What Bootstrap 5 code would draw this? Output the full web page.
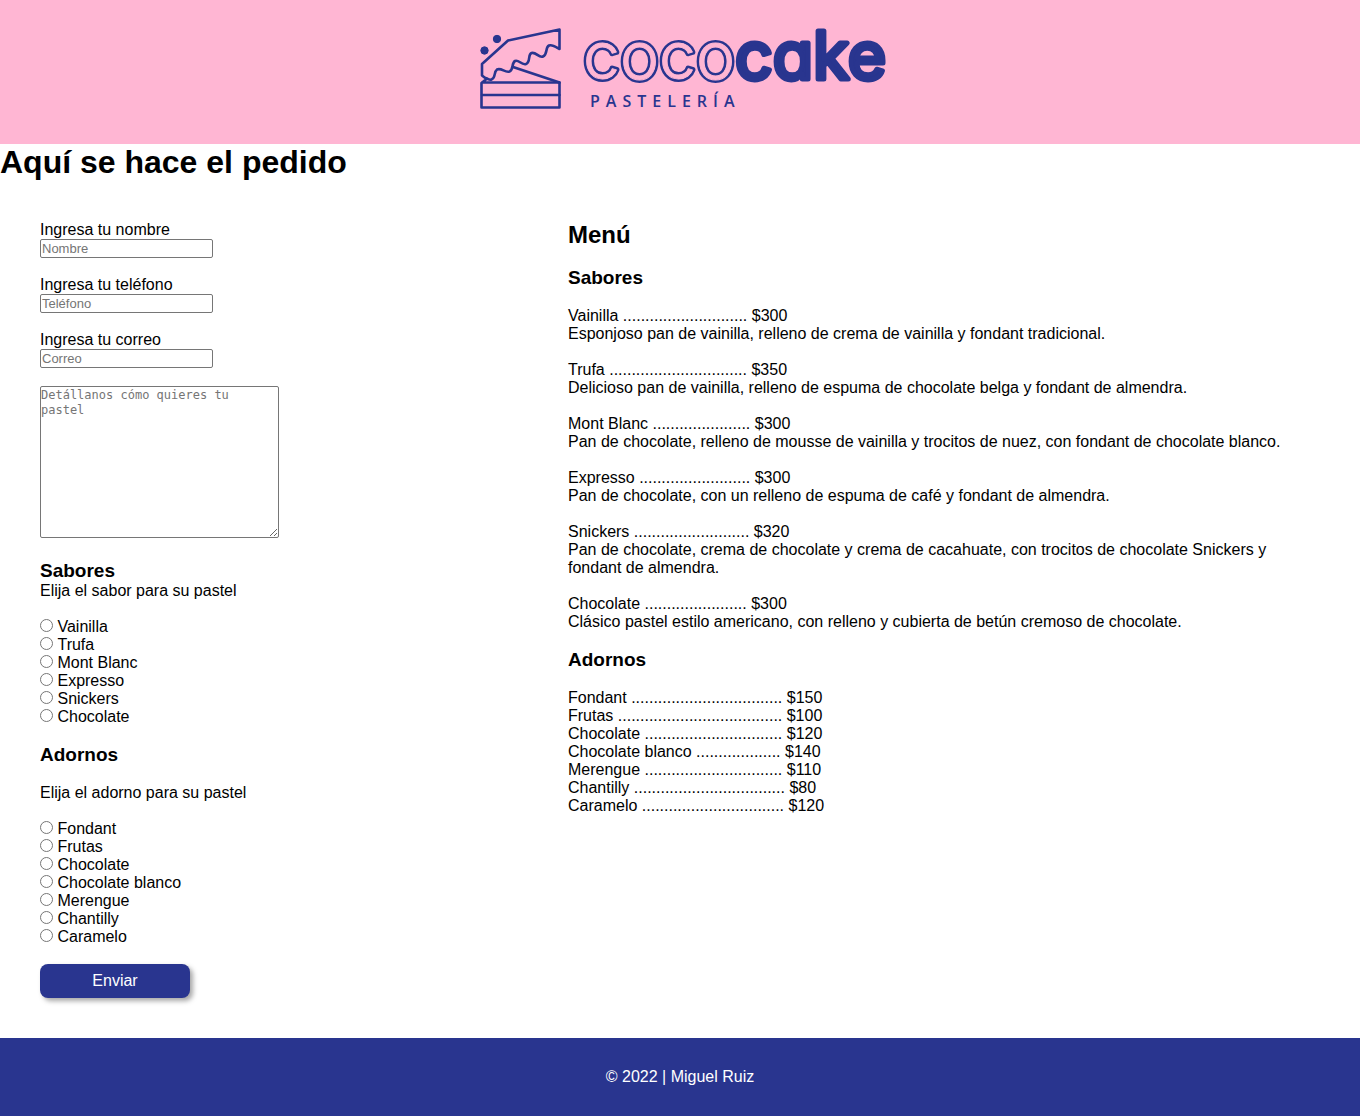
<!DOCTYPE html>
<html lang="es">
<head>
<meta charset="utf-8">
<meta name="viewport" content="width=device-width, initial-scale=1">
<title>Coco Cake | Pedido</title>
<link href="https://cdn.jsdelivr.net/npm/bootstrap@5.3.0/dist/css/bootstrap.min.css" rel="stylesheet">
<style>
  :root { --coco-pink: #ffb6d3; --coco-blue: #29358f; }
  body { font: 16px/18px "Liberation Sans", Arial, sans-serif; color: #000; background: #fff; }
  .site-head { background: var(--coco-pink); }
  .logo { width: 420px; height: 144px; max-width: 100%; }
  .ink { fill: var(--coco-blue); stroke: var(--coco-blue); }
  .icing { fill: var(--coco-pink); stroke: var(--coco-pink); }
  .logo-cake { font: 400 66px Inter, sans-serif; font-feature-settings: "cv11"; }
  .logo-coco { font: 300 66px Inter, sans-serif; }
  .logo-sub { font: 600 16px "Open Sans", sans-serif; letter-spacing: 6px; }
  h1, h2, h3 { font-weight: 700; margin: 0; }
  h1 { font-size: 32px; line-height: 37px; }
  h2 { font-size: 24px; line-height: 27px; margin-bottom: 20px; }
  h3 { font-size: 19px; line-height: 19px; padding-bottom: 2px; }
  .order { padding: 40px; }
  .order > .row { --bs-gutter-x: 40px; }
  p, .choices, .extras { margin: 0 0 18px; }
  .field { margin-bottom: 18px; }
  .field input { width: 173px; height: 19px; font-size: 13px; line-height: 15px; }
  .field input, .details { display: block; padding: 1px; border: 1px solid #767676; border-radius: 2px; background: #fff; }
  .details { width: 239px; height: 152px; padding: 1px 0; font: 12px/15px "DejaVu Sans Mono", monospace; margin-bottom: 23px; }
  ::placeholder { color: #757575; opacity: 1; }
  .choices input { width: 13px; height: 13px; margin: 0; }
  .section-gap { margin: 19px 0 18px; }
  .send { width: 150px; height: 34px; padding: 0; border: 0; border-radius: 8px; background: var(--coco-blue); color: #fff; line-height: 18px; box-shadow: 3px 3px 5px rgba(0,0,0,.35); }
  .send:hover { background: #1d286f; color: #fff; }
  .site-foot { background: var(--coco-blue); color: #fff; padding: 30px 0; }
  @media (min-width: 768px) {
    .order-form { width: 40%; }
    .order-menu { width: 60%; }
  }
</style>
</head>
<body>
<header class="site-head d-flex justify-content-center">
  <svg class="logo" viewBox="470 0 420 144" role="img" aria-label="Coco Cake Pastelería">
    <g class="ink" style="fill:none" stroke-width="2.6" stroke-linejoin="round" stroke-linecap="round">
      <path d="M482 82.500H559.500V107.500H481.500V83L486.500 79L482 75.500V64L508 40.500L559.500 29.500V49C556 47 552 44 549 45.500C545 47.500 548 54 543 56.500C539 58.500 536 51.500 531.500 53C527.500 54.500 531 62 526 64C521.500 65.500 518.500 59 515 61C511.500 63 513.500 70 509.500 71.500C505 73 501.500 67.500 497 69.500C493.500 72 496 78 491.500 79.500C489.500 80.500 487.500 79 486 78"/>
      <path d="M513 67L559.500 82.500M482 95H559.500"/>
    </g>
    <g class="ink" stroke="none">
      <circle cx="497" cy="39" r="3.700"/>
      <circle cx="484.500" cy="50.500" r="3.700"/>
    </g>
    <g class="ink" stroke-width="6" stroke-linejoin="round">
      <text id="coco" class="logo-coco" x="583" y="79">coco</text>
    </g>
    <use href="#coco" class="icing" stroke-width="1" stroke-linejoin="round"/>
    <text class="logo-cake ink" x="735" y="79" stroke-width="5" stroke-linejoin="round">cake</text>
    <text class="logo-sub ink" x="590" y="107" stroke-width="0">PASTELERÍA</text>
  </svg>
</header>

<main>
  <h1>Aquí se hace el pedido</h1>
  <div class="order">
    <div class="row">
      <form class="order-form">
        <div class="field"><label class="d-block" for="nombre">Ingresa tu nombre</label><input type="text" id="nombre" placeholder="Nombre"></div>
        <div class="field"><label class="d-block" for="telefono">Ingresa tu teléfono</label><input type="tel" id="telefono" placeholder="Teléfono"></div>
        <div class="field"><label class="d-block" for="correo">Ingresa tu correo</label><input type="email" id="correo" placeholder="Correo"></div>
        <textarea class="details" aria-label="Detalles del pastel" placeholder="Detállanos cómo quieres tu pastel"></textarea>

        <h3>Sabores</h3>
        <p>Elija el sabor para su pastel</p>
        <div class="choices">
          <div><input type="radio" name="sabor" id="s1"> <label for="s1">Vainilla</label></div>
          <div><input type="radio" name="sabor" id="s2"> <label for="s2">Trufa</label></div>
          <div><input type="radio" name="sabor" id="s3"> <label for="s3">Mont Blanc</label></div>
          <div><input type="radio" name="sabor" id="s4"> <label for="s4">Expresso</label></div>
          <div><input type="radio" name="sabor" id="s5"> <label for="s5">Snickers</label></div>
          <div><input type="radio" name="sabor" id="s6"> <label for="s6">Chocolate</label></div>
        </div>

        <h3 class="section-gap">Adornos</h3>
        <p>Elija el adorno para su pastel</p>
        <div class="choices">
          <div><input type="radio" name="adorno" id="a1"> <label for="a1">Fondant</label></div>
          <div><input type="radio" name="adorno" id="a2"> <label for="a2">Frutas</label></div>
          <div><input type="radio" name="adorno" id="a3"> <label for="a3">Chocolate</label></div>
          <div><input type="radio" name="adorno" id="a4"> <label for="a4">Chocolate blanco</label></div>
          <div><input type="radio" name="adorno" id="a5"> <label for="a5">Merengue</label></div>
          <div><input type="radio" name="adorno" id="a6"> <label for="a6">Chantilly</label></div>
          <div><input type="radio" name="adorno" id="a7"> <label for="a7">Caramelo</label></div>
        </div>
        <button type="submit" class="btn send d-block">Enviar</button>
      </form>

      <section class="order-menu">
        <h2>Menú</h2>
        <h3 class="section-gap">Sabores</h3>
        <p>Vainilla ............................ $300<br>Esponjoso pan de vainilla, relleno de crema de vainilla y fondant tradicional.</p>
        <p>Trufa ............................... $350<br>Delicioso pan de vainilla, relleno de espuma de chocolate belga y fondant de almendra.</p>
        <p>Mont Blanc ...................... $300<br>Pan de chocolate, relleno de mousse de vainilla y trocitos de nuez, con fondant de chocolate blanco.</p>
        <p>Expresso ......................... $300<br>Pan de chocolate, con un relleno de espuma de café y fondant de almendra.</p>
        <p>Snickers .......................... $320<br>Pan de chocolate, crema de chocolate y crema de cacahuate, con trocitos de chocolate Snickers y fondant de almendra.</p>
        <p>Chocolate ....................... $300<br>Clásico pastel estilo americano, con relleno y cubierta de betún cremoso de chocolate.</p>
        <h3 class="section-gap">Adornos</h3>
        <div class="extras">
          Fondant .................................. $150<br>
          Frutas ..................................... $100<br>
          Chocolate ............................... $120<br>
          Chocolate blanco ................... $140<br>
          Merengue ............................... $110<br>
          Chantilly .................................. $80<br>
          Caramelo ................................ $120
        </div>
      </section>
    </div>
  </div>
</main>

<footer class="site-foot text-center">© 2022 | Miguel Ruiz</footer>
<script src="https://cdn.jsdelivr.net/npm/bootstrap@5.3.0/dist/js/bootstrap.bundle.min.js"></script>
</body>
</html>
